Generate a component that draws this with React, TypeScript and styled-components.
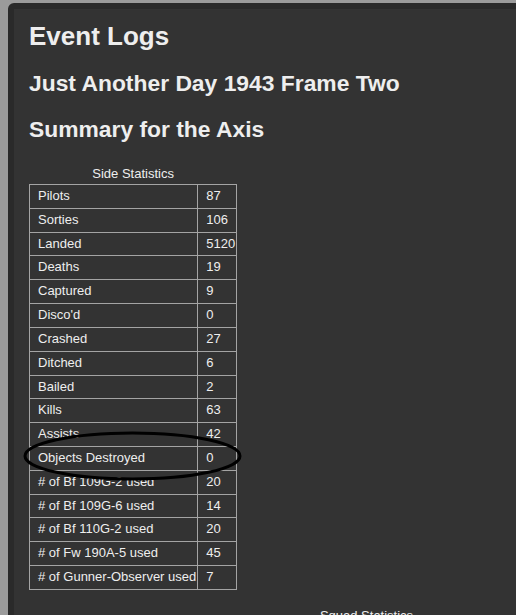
import React from "react";
import styled, { createGlobalStyle } from "styled-components";

const GlobalStyle = createGlobalStyle`
  html, body {
    margin: 0;
    background: #9b9b9b;
    overflow: hidden;
  }
  body {
    padding: 3px 0 0 8px;
  }
`;

const Panel = styled.main`
  width: 740px;
  min-height: 700px;
  background: #333333;
  border: 6px solid #2a2a2a;
  border-radius: 6px;
  padding: 12px 15px 20px;
  font-family: "Liberation Sans", Arial, sans-serif;
  color: #eeeeee;
`;

const Title = styled.h1`
  margin: 0 0 19px;
  font-size: 26px;
  line-height: 30px;
  font-weight: bold;
`;

const Subtitle = styled.h2`
  margin: 0 0 20px;
  font-size: 22.85px;
  line-height: 26px;
  font-weight: bold;
`;

const TableBlock = styled.div<{ $width?: number; $top: number }>`
  position: relative;
  display: block;
  width: ${(p) => (p.$width ? `${p.$width}px` : "fit-content")};
  margin: ${(p) => p.$top}px 0 0;
`;

const StatsTable = styled.table`
  border-collapse: collapse;
  font-size: 13px;
  width: 100%;
`;

const Caption = styled.caption`
  caption-side: top;
  font-size: 13px;
  line-height: 15px;
  padding-bottom: 3px;
  text-align: center;
  color: #eeeeee;
`;

const Cell = styled.td`
  border: 1px solid #a4a4a4;
  padding: 4px 1px 4px 8px;
  line-height: 14.82px;
  white-space: nowrap;
  text-align: left;
`;

const HeadCell = styled.th`
  border: 1px solid #a4a4a4;
  padding: 4px 1px 4px 8px;
  line-height: 14.82px;
  white-space: nowrap;
  text-align: left;
  font-weight: bold;
`;

const Annotation = styled.svg`
  position: absolute;
  left: -6px;
  top: 265px;
  width: 224px;
  height: 52px;
  pointer-events: none;
  overflow: visible;
`;

const sideStats: [string, string][] = [
  ["Pilots", "87"],
  ["Sorties", "106"],
  ["Landed", "5120"],
  ["Deaths", "19"],
  ["Captured", "9"],
  ["Disco'd", "0"],
  ["Crashed", "27"],
  ["Ditched", "6"],
  ["Bailed", "2"],
  ["Kills", "63"],
  ["Assists", "42"],
  ["Objects Destroyed", "0"],
  ["# of Bf 109G-2 used", "20"],
  ["# of Bf 109G-6 used", "14"],
  ["# of Bf 110G-2 used", "20"],
  ["# of Fw 190A-5 used", "45"],
  ["# of Gunner-Observer used", "7"],
];

const squadColumns = ["Squad", "Pilots", "Sorties", "Kills", "Assists", "Deaths", "Captured", "Objects Destroyed"];

export default function App() {
  return (
    <>
      <GlobalStyle />
      <Panel>
        <Title>Event Logs</Title>
        <Subtitle>Just Another Day 1943 Frame Two</Subtitle>
        <Subtitle>Summary for the Axis</Subtitle>
        <TableBlock $top={24}>
          <StatsTable>
            <Caption>Side Statistics</Caption>
            <tbody>
              {sideStats.map(([label, value]) => (
                <tr key={label}>
                  <Cell>{label}</Cell>
                  <Cell>{value}</Cell>
                </tr>
              ))}
            </tbody>
          </StatsTable>
          <Annotation viewBox="0 0 224 52">
            <ellipse
              cx="109.5"
              cy="25"
              rx="107.5"
              ry="23"
              fill="none"
              stroke="#000"
              strokeWidth="3"
            />
          </Annotation>
        </TableBlock>
        <TableBlock $width={675} $top={18}>
          <StatsTable>
            <Caption>Squad Statistics</Caption>
            <thead>
              <tr>
                {squadColumns.map((c) => (
                  <HeadCell key={c}>{c}</HeadCell>
                ))}
              </tr>
            </thead>
          </StatsTable>
        </TableBlock>
      </Panel>
    </>
  );
}
